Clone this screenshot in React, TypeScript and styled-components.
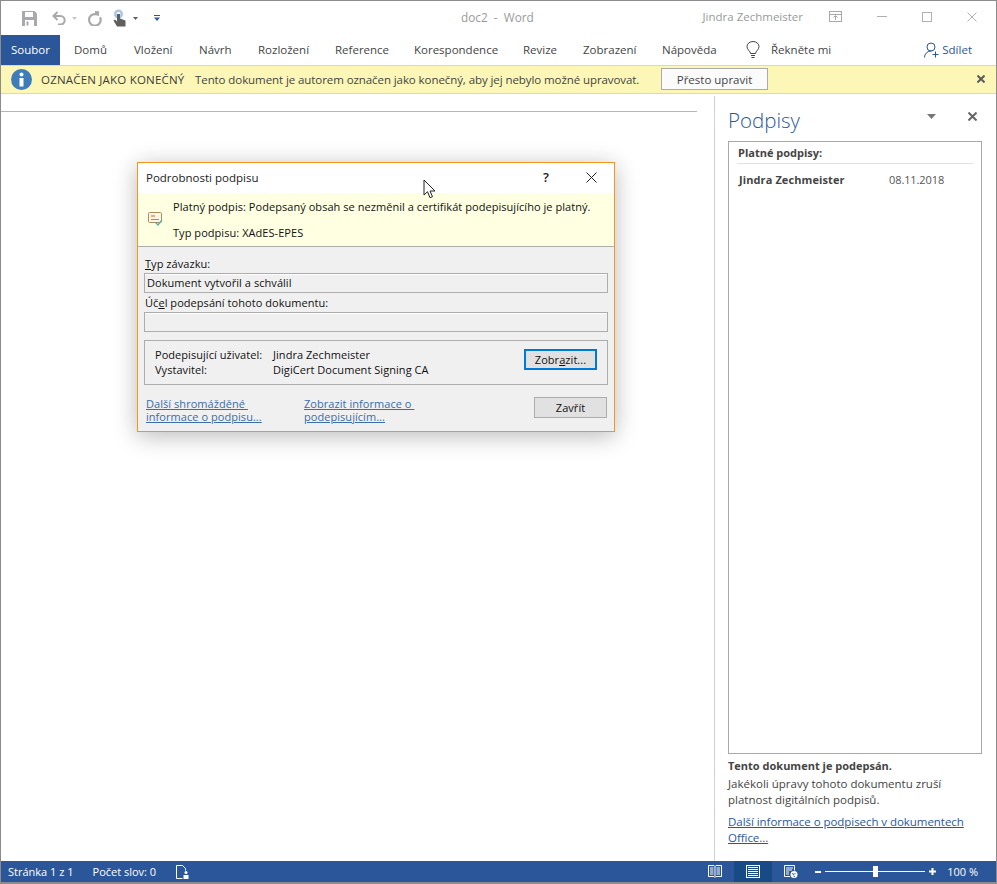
import React from "react";
import styled, { createGlobalStyle } from "styled-components";

const Global = createGlobalStyle`
  html, body { margin: 0; padding: 0; background: #fff; }
  body { font-family: "Open Sans", "Noto Sans", sans-serif; font-size: 11.5px; color: #444; }
  * { box-sizing: border-box; }
`;

const Win = styled.div`
  position: relative;
  width: 997px;
  height: 884px;
  border: 1px solid #8c8c8c;
  border-bottom-width: 2px;
  background: #fff;
  display: flex;
  flex-direction: column;
  overflow: hidden;
`;

/* ---------- title bar ---------- */
const TitleBar = styled.div`
  height: 34px;
  display: flex;
  align-items: center;
  flex: none;
`;
const Qat = styled.div`
  width: 460px;
  display: flex;
  align-items: center;
  padding-left: 21px;
  flex: none;
`;
const QatSlot = styled.span<{ $w: number }>`
  width: ${(p) => p.$w}px;
  display: flex;
  align-items: center;
  flex: none;
`;
const DocTitle = styled.div`
  color: #9a9a9a;
  font-size: 11.8px;
  white-space: pre;
  margin-top: -3px;
`;
const Account = styled.div`
  margin-left: auto;
  margin-right: 26px;
  color: #9a9a9a;
  font-size: 11.5px;
  margin-top: -4px;
`;
const WinButtons = styled.div`
  display: flex;
  align-items: center;
  gap: 35px;
  padding-right: 19px;
  margin-top: -3px;
`;

/* ---------- ribbon ---------- */
const Ribbon = styled.div`
  height: 30px;
  flex: none;
  display: flex;
  align-items: center;
`;
const FileTab = styled.div`
  width: 59px;
  height: 30px;
  background: #2b579a;
  color: #fff;
  display: flex;
  align-items: center;
  justify-content: center;
  font-size: 11.5px;
  padding-bottom: 1px;
  margin-right: 14px;
`;
const Tabs = styled.div`
  display: flex;
  align-items: center;
  padding-bottom: 1px;
`;
const Tab = styled.span<{ $w: number }>`
  width: ${(p) => p.$w}px;
  flex: none;
  color: #444;
  font-size: 11.5px;
`;
const Tell = styled.div`
  display: flex;
  align-items: center;
  gap: 11px;
  margin-left: 1px;
  color: #444;
  padding-bottom: 1px;
`;
const Share = styled.div`
  margin-left: auto;
  margin-right: 24px;
  display: flex;
  align-items: center;
  gap: 3px;
  color: #2b579a;
  padding-bottom: 1px;
`;

/* ---------- message bar ---------- */
const MsgBar = styled.div`
  height: 29px;
  flex: none;
  background: #fcf7b6;
  border-top: 1px solid #e3dc96;
  border-bottom: 1px solid #e3dc96;
  display: flex;
  align-items: center;
  padding: 0 0 1px 9px;
  color: #444;
`;
const MsgIcon = styled.span`
  display: flex;
  margin-top: 1px;
`;
const MsgHead = styled.span`
  margin-left: 8px;
  width: 154px;
  color: #3c3c3c;
  flex: none;
  white-space: nowrap;
  letter-spacing: 0.2px;
`;
const MsgText = styled.span`
  width: 466px;
  flex: none;
  white-space: nowrap;
  letter-spacing: -0.08px;
`;
const MsgButton = styled.div`
  width: 107px;
  height: 22px;
  background: #fbfbfb;
  border: 1px solid #ababab;
  display: flex;
  align-items: center;
  justify-content: center;
  color: #444;
`;
const MsgClose = styled.span`
  margin-left: auto;
  margin-right: 11px;
  display: flex;
`;

/* ---------- body ---------- */
const Body = styled.div`
  flex: 1;
  min-height: 0;
  display: flex;
  padding-top: 2px;
`;
const DocArea = styled.div`
  width: 713px;
  flex: none;
  padding-top: 15px;
`;
const Ruler = styled.div`
  width: 696px;
  height: 1px;
  background: #b5b5b5;
`;
const Pane = styled.div`
  flex: 1;
  border-left: 1px solid #d2d2d2;
  padding: 0 14px 0 13px;
  display: flex;
  flex-direction: column;
`;
const PaneHead = styled.div`
  height: 45px;
  flex: none;
  display: flex;
  align-items: center;
  padding-right: 5px;
`;
const PaneTitle = styled.div`
  font-size: 20.5px;
  color: #2b579a;
  font-weight: 300;
  margin-right: auto;
  margin-top: 2px;
`;
const PaneTools = styled.div`
  display: flex;
  align-items: center;
  gap: 32px;
  margin-top: -5px;
`;
const SigBox = styled.div`
  height: 613px;
  flex: none;
  border: 1px solid #a8a8a8;
  padding: 2px 8px 0;
`;
const SigHead = styled.div`
  height: 20px;
  border-bottom: 1px solid #e2e2e2;
  font-weight: 700;
  font-size: 11px;
  padding-left: 1px;
  line-height: 18px;
  color: #444;
`;
const SigRow = styled.div`
  display: flex;
  margin-top: 8px;
  padding-left: 2px;
  line-height: 16px;
`;
const SigName = styled.span`
  width: 150px;
  font-weight: 700;
  font-size: 11px;
  letter-spacing: 0.1px;
`;
const SigDate = styled.span`
  color: #555;
  font-size: 11px;
  letter-spacing: -0.1px;
`;
const Notes = styled.div`
  padding-top: 4px;
  line-height: 16px;
`;
const NoteHead = styled.div`
  font-weight: 700;
  font-size: 11px;
  margin-bottom: 2px;
`;
const NoteLink = styled.a`
  display: block;
  color: #2b579a;
  text-decoration: underline;
  margin-top: 6px;
  letter-spacing: -0.05px;
`;

/* ---------- status bar ---------- */
const Status = styled.div`
  height: 21px;
  flex: none;
  background: #2b579a;
  color: #fff;
  display: flex;
  align-items: center;
  font-size: 11px;
  padding-left: 7px;
`;
const StatusItem = styled.span`
  margin-right: 20px;
  white-space: nowrap;
  &:first-child {
    margin-right: 19px;
  }
`;
const ViewBtns = styled.div`
  margin-left: auto;
  display: flex;
  align-items: center;
  height: 100%;
`;
const ViewBtn = styled.span<{ $on?: boolean }>`
  width: 38px;
  height: 100%;
  display: flex;
  align-items: center;
  justify-content: center;
  background: ${(p) => (p.$on ? "#184a86" : "transparent")};
`;
const Zoom = styled.div`
  display: flex;
  align-items: center;
  margin-left: 5px;
  margin-right: 18px;
`;
const ZoomGlyph = styled.span`
  display: flex;
`;
const Slider = styled.span`
  position: relative;
  width: 100px;
  height: 1px;
  background: #fff;
  margin: 0 4px;
`;
const Thumb = styled.span`
  position: absolute;
  left: 48px;
  top: -5px;
  width: 5px;
  height: 11px;
  background: #fff;
`;
const ZoomVal = styled.span`
  margin-left: 11px;
  white-space: nowrap;
`;

/* ---------- dialog ---------- */
const Dialog = styled.div`
  position: absolute;
  left: 136px;
  top: 161px;
  width: 478px;
  height: 270px;
  background: #f0f0f0;
  border: 1px solid #f7941d;
  box-shadow: 0 4px 22px rgba(0, 0, 0, 0.28);
  display: flex;
  flex-direction: column;
  color: #111;
  font-size: 11px;
  letter-spacing: 0.05px;
`;
const DlgTitle = styled.div`
  height: 30px;
  flex: none;
  background: #fff;
  display: flex;
  align-items: center;
  padding: 0 17px 2px 8px;
  font-size: 11.5px;
  letter-spacing: 0;
  color: #222;
`;
const DlgHelp = styled.span`
  margin-left: auto;
  margin-right: 37px;
  font-size: 13px;
  color: #222;
  font-weight: 600;
`;
const Banner = styled.div`
  height: 54px;
  flex: none;
  background: #ffffe1;
  border-bottom: 1px solid #adadad;
  display: flex;
  align-items: center;
  padding-left: 10px;
`;
const BannerIcon = styled.span`
  display: flex;
  margin-top: -2px;
`;
const BannerText = styled.div`
  margin-left: 10px;
  display: flex;
  flex-direction: column;
  gap: 12px;
  line-height: 14px;
`;
const DlgBody = styled.div`
  flex: 1;
  padding: 10px 6px 0 6px;
  display: flex;
  flex-direction: column;
`;
const FieldLabel = styled.div`
  line-height: 14px;
  padding-left: 1px;
  height: 16px;
`;
const Field = styled.div`
  height: 20px;
  border: 1px solid #adadad;
  box-shadow: inset 0 1px 0 #fff;
  line-height: 18px;
  padding-left: 2px;
  margin-bottom: 3px;
`;
const Group = styled.div`
  margin-top: 5px;
  height: 45px;
  border: 1px solid #adadad;
  display: flex;
  align-items: center;
  padding: 0 10px;
`;
const Grid = styled.div`
  display: grid;
  grid-template-columns: 118px auto;
  line-height: 15px;
  margin-top: -2px;
`;
const DlgBtn = styled.div<{ $focus?: boolean }>`
  width: 73px;
  height: 21px;
  flex: none;
  margin-left: auto;
  background: #e1e1e1;
  border: ${(p) => (p.$focus ? "2px solid #0078d7" : "1px solid #adadad")};
  display: flex;
  align-items: center;
  justify-content: center;
  color: #111;
`;
const GroupBtn = styled(DlgBtn)`
  align-self: flex-start;
  margin-top: 8px;
`;
const Foot = styled.div`
  display: flex;
  align-items: flex-start;
  margin-top: 12px;
  padding: 0 1px 0 2px;
`;
const Links = styled.a<{ $w: number }>`
  width: ${(p) => p.$w}px;
  flex: none;
  color: #3a6ea5;
  text-decoration: underline;
  line-height: 13px;
`;
const CursorMark = styled.svg`
  position: absolute;
  left: 422px;
  top: 178px;
`;

const Gi = ({ w, h, children }: { w: number; h: number; children: React.ReactNode }) => (
  <svg width={w} height={h} viewBox={`0 0 ${w} ${h}`} fill="none">
    {children}
  </svg>
);

const Caret = ({ c = "#b5b5b5" }: { c?: string }) => (
  <Gi w={5} h={3}>
    <path d="M0 0h5L2.5 3z" fill={c} />
  </Gi>
);

const X = ({ s, c, w }: { s: number; c: string; w: number }) => (
  <Gi w={s} h={s}>
    <path d={`M0.5 0.5L${s - 0.5} ${s - 0.5}M${s - 0.5} 0.5L0.5 ${s - 0.5}`} stroke={c} strokeWidth={w} />
  </Gi>
);

export default function App() {
  return (
    <>
      <Global />
      <Win>
        <TitleBar>
          <Qat>
            <QatSlot $w={30}>
              <Gi w={15} h={15}>
                <path d="M0 0h12.5L15 2.5V15H0z" fill="#a9a9ad" />
                <rect x="3" y="1" width="8" height="5" fill="#fff" />
                <rect x="3" y="9" width="9" height="6" fill="#fff" />
                <rect x="4.5" y="10.5" width="2" height="4" fill="#a9a9ad" />
              </Gi>
            </QatSlot>
            <QatSlot $w={20}>
              <Gi w={15} h={14}>
                <path d="M5.5 1L1.5 5l4 4" stroke="#a9a9a9" strokeWidth="2" />
                <path d="M2 5h6.5a4.2 4.2 0 0 1 0 8.4H6" stroke="#a9a9a9" strokeWidth="2" />
              </Gi>
            </QatSlot>
            <QatSlot $w={15}>
              <Caret c="#c4c4c4" />
            </QatSlot>
            <QatSlot $w={26}>
              <Gi w={15} h={15}>
                <path d="M9 3.2a5.8 5.8 0 1 0 4 3" stroke="#a9a9a9" strokeWidth="2.2" />
                <path d="M8 0l4 .2V5L8 4z" fill="#a9a9a9" />
              </Gi>
            </QatSlot>
            <QatSlot $w={20}>
              <Gi w={13} h={18}>
                <circle cx="5.500" cy="5" r="4.500" fill="#a8c6e6" />
                <circle cx="5.500" cy="5" r="2" fill="#fff" />
                <path d="M4 5v7.500L2 10.500 0.500 11.500 4 17.500h8.500V11.500L7 9.500V5z" fill="#5f5f5f" />
              </Gi>
            </QatSlot>
            <QatSlot $w={21}>
              <Caret c="#5f5f5f" />
            </QatSlot>
            <QatSlot $w={8}>
              <Gi w={6} h={6}>
                <path d="M0 0.5h6" stroke="#2b579a" />
                <path d="M0 2.500h6L3 6z" fill="#2b579a" />
              </Gi>
            </QatSlot>
          </Qat>
          <DocTitle>doc2  -  Word</DocTitle>
          <Account>Jindra Zechmeister</Account>
          <WinButtons>
            <Gi w={13} h={11}>
              <rect x="0.5" y="0.5" width="12" height="10" stroke="#a9a9a9" />
              <path d="M0.500 3.500h12M6.500 9V5M4.500 6.500l2-2 2 2" stroke="#a9a9a9" />
            </Gi>
            <Gi w={10} h={1}>
              <rect width="10" height="1" fill="#b0b0b0" />
            </Gi>
            <Gi w={10} h={10}>
              <rect x="0.5" y="0.5" width="9" height="9" stroke="#b0b0b0" />
            </Gi>
            <X s={10} c="#b0b0b0" w={1} />
          </WinButtons>
        </TitleBar>

        <Ribbon>
          <FileTab>Soubor</FileTab>
          <Tabs>
            <Tab $w={60}>Domů</Tab>
            <Tab $w={65}>Vložení</Tab>
            <Tab $w={59}>Návrh</Tab>
            <Tab $w={77}>Rozložení</Tab>
            <Tab $w={79}>Reference</Tab>
            <Tab $w={109}>Korespondence</Tab>
            <Tab $w={60}>Revize</Tab>
            <Tab $w={79}>Zobrazení</Tab>
            <Tab $w={83}>Nápověda</Tab>
          </Tabs>
          <Tell>
            <Gi w={14} h={17}>
              <path
                d="M4.500 12.500C4.500 10 1 9 1 5.500a6 5 0 0 1 12 0C13 9 9.500 10 9.500 12.500z"
                stroke="#444"
              />
              <path d="M5 14.500h4M5.500 16.500h3" stroke="#444" />
            </Gi>
            <span>Řekněte mi</span>
          </Tell>
          <Share>
            <Gi w={15} h={16}>
              <circle cx="7" cy="5" r="4" stroke="#2b579a" />
              <path d="M0.500 15.500a6.500 6.500 0 0 1 7-6.500M8.500 12.500h6M11.500 9.500v6" stroke="#2b579a" />
            </Gi>
            <span>Sdílet</span>
          </Share>
        </Ribbon>

        <MsgBar>
          <MsgIcon>
            <Gi w={23} h={21}>
              <circle cx="11.500" cy="10.500" r="10.500" fill="#3f7cba" />
              <circle cx="11.500" cy="5.500" r="2" fill="#fff" />
              <rect x="9.500" y="9" width="4" height="8.500" fill="#fff" />
            </Gi>
          </MsgIcon>
          <MsgHead>OZNAČEN JAKO KONEČNÝ</MsgHead>
          <MsgText>Tento dokument je autorem označen jako konečný, aby jej nebylo možné upravovat.</MsgText>
          <MsgButton>Přesto upravit</MsgButton>
          <MsgClose>
            <X s={8} c="#5a5a5a" w={2} />
          </MsgClose>
        </MsgBar>

        <Body>
          <DocArea>
            <Ruler />
          </DocArea>
          <Pane>
            <PaneHead>
              <PaneTitle>Podpisy</PaneTitle>
              <PaneTools>
                <Gi w={9} h={5}>
                  <path d="M0 0h9L4.500 5z" fill="#777" />
                </Gi>
                <X s={9} c="#666" w={2} />
              </PaneTools>
            </PaneHead>
            <SigBox>
              <SigHead>Platné podpisy:</SigHead>
              <SigRow>
                <SigName>Jindra Zechmeister</SigName>
                <SigDate>08.11.2018</SigDate>
              </SigRow>
            </SigBox>
            <Notes>
              <NoteHead>Tento dokument je podepsán.</NoteHead>
              <div>Jakékoli úpravy tohoto dokumentu zruší</div>
              <div>platnost digitálních podpisů.</div>
              <NoteLink>
                Další informace o podpisech v dokumentech
                <br />
                Office...
              </NoteLink>
            </Notes>
          </Pane>
        </Body>

        <Status>
          <StatusItem>Stránka 1 z 1</StatusItem>
          <StatusItem>Počet slov: 0</StatusItem>
          <Gi w={13} h={14}>
            <path d="M0.500 0.500h6l3 3v2M0.500 0.500v13h6" stroke="#fff" />
            <circle cx="10" cy="7.500" r="1.500" fill="#fff" />
            <rect x="7.500" y="10" width="5" height="4" fill="#fff" />
          </Gi>
          <ViewBtns>
            <ViewBtn>
              <Gi w={14} h={13}>
                <path d="M0.500 0.500h5.500l1 1 1-1h5.500v11h-5.500l-1 1-1-1h-5.500zM7 1.500v10" stroke="#fff" />
                <path d="M2 3h3.500M2 5h3.500M2 7h3.500M2 9h3.500M8.500 3h3.500M8.500 5h3.500M8.500 7h3.500M8.500 9h3.500" stroke="#fff" />
              </Gi>
            </ViewBtn>
            <ViewBtn $on>
              <Gi w={14} h={13}>
                <rect x="0.500" y="0.500" width="13" height="12" stroke="#fff" />
                <path d="M2 2.500h10M2 4.500h10M2 6.500h10M2 8.500h10M2 10.500h10" stroke="#fff" />
              </Gi>
            </ViewBtn>
            <ViewBtn>
              <Gi w={14} h={13}>
                <path d="M6 11.500H0.500v-11h10v5" stroke="#fff" />
                <path d="M2 3h7M2 5h6M2 7h3M2 9h3" stroke="#fff" />
                <circle cx="10" cy="9.500" r="3.500" fill="#fff" />
                <path d="M8 8.500l2 1 1.500-1.500M9.500 11l1.500.5" stroke="#2b579a" />
              </Gi>
            </ViewBtn>
          </ViewBtns>
          <Zoom>
            <ZoomGlyph>
              <Gi w={6} h={2}>
                <rect width="6" height="2" fill="#fff" />
              </Gi>
            </ZoomGlyph>
            <Slider>
              <Thumb />
            </Slider>
            <ZoomGlyph>
              <Gi w={7} h={7}>
                <path d="M0 3.500h7M3.500 0v7" stroke="#fff" strokeWidth="2" />
              </Gi>
            </ZoomGlyph>
            <ZoomVal>100 %</ZoomVal>
          </Zoom>
        </Status>

        <Dialog>
          <DlgTitle>
            Podrobnosti podpisu
            <DlgHelp>?</DlgHelp>
            <X s={11} c="#222" w={1} />
          </DlgTitle>
          <Banner>
            <BannerIcon>
              <Gi w={15} h={14}>
                <rect x="0.500" y="0.500" width="13" height="10" rx="1" fill="#fff6e2" stroke="#ab8a62" />
                <rect x="3" y="3" width="4" height="2" fill="#e8a77c" />
                <path d="M3 7.500h8" stroke="#5f9ad0" />
                <path d="M7.500 10.500l2.500 2.500 4-5" stroke="#5fb39a" strokeWidth="1.400" />
              </Gi>
            </BannerIcon>
            <BannerText>
              <span>Platný podpis: Podepsaný obsah se nezměnil a certifikát podepisujícího je platný.</span>
              <span>Typ podpisu: XAdES-EPES</span>
            </BannerText>
          </Banner>
          <DlgBody>
            <FieldLabel>
              <u>T</u>yp závazku:
            </FieldLabel>
            <Field>Dokument vytvořil a schválil</Field>
            <FieldLabel>
              Úč<u>e</u>l podepsání tohoto dokumentu:
            </FieldLabel>
            <Field />
            <Group>
              <Grid>
                <span>Podepisující uživatel:</span>
                <span>Jindra Zechmeister</span>
                <span>Vystavitel:</span>
                <span>DigiCert Document Signing CA</span>
              </Grid>
              <GroupBtn $focus>
                <span>
                  Zobr<u>a</u>zit...
                </span>
              </GroupBtn>
            </Group>
            <Foot>
              <Links $w={158}>
                Další shromážděné&nbsp;
                <br />
                informace o podpisu...
              </Links>
              <Links $w={230}>
                Zobrazit informace o&nbsp;
                <br />
                podepisujícím...
              </Links>
              <DlgBtn>Zavřít</DlgBtn>
            </Foot>
          </DlgBody>
        </Dialog>

        <CursorMark width="14" height="21" viewBox="0 0 14 21">
          <path d="M1 1v15l3.500-3.300 2.500 6 2.500-1-2.500-5.700h5z" fill="#fff" stroke="#222" />
        </CursorMark>
      </Win>
    </>
  );
}
